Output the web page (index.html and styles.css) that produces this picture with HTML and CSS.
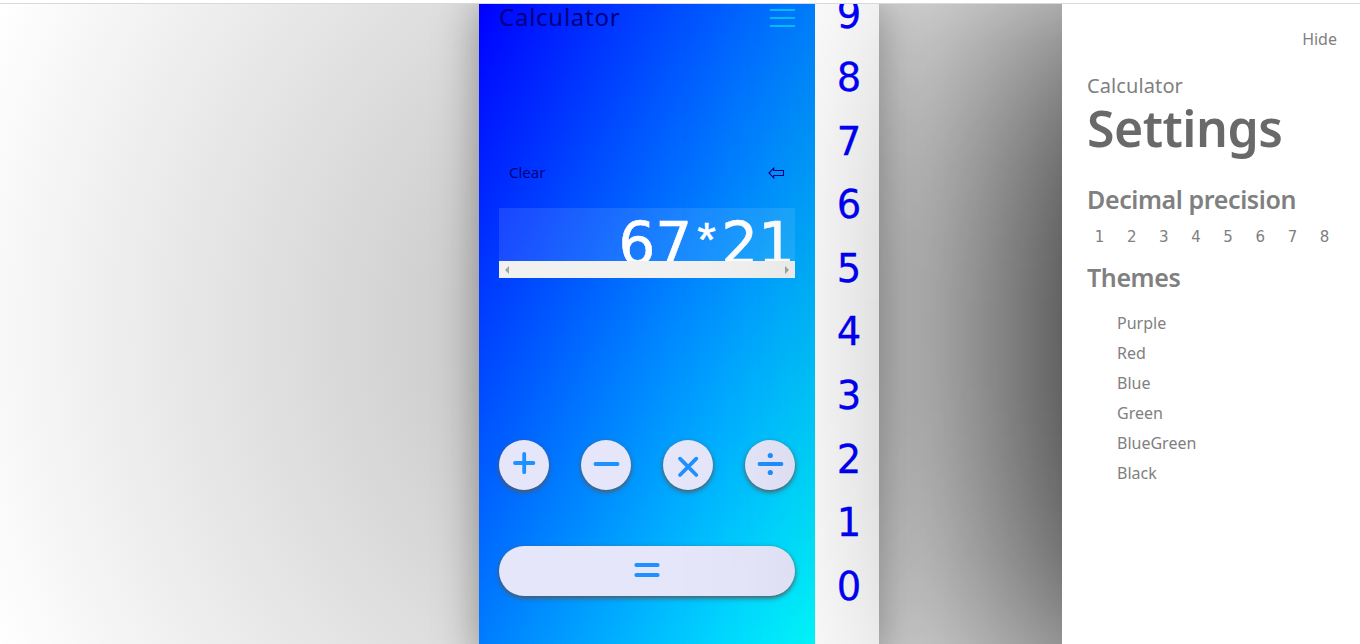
FILE: index.html
```html
<!DOCTYPE html>
<html lang="en">
<head>
<meta charset="utf-8">
<title>Calculator</title>
<link rel="stylesheet" href="styles.css">
</head>
<body>
<div class="page">
  <main class="calculator">
    <section class="face">
      <header class="top">
        <h1 class="title">Calculator</h1>
        <div class="menu"><i></i><i></i><i></i></div>
      </header>
      <div class="actions">
        <span class="clear">Clear</span>
        <svg class="back" width="17" height="12" viewBox="0 0 17 12"><path d="M1 6 5.7 1.2V3.5H15.5V8.5H5.7V10.8Z" fill="none" stroke="#000080" stroke-width="1.1"/></svg>
      </div>
      <div class="display">
        <div class="expression">67<span class="star">*</span>21</div>
        <div class="scroll">
          <svg width="4" height="8" viewBox="0 0 4 8"><path d="M4 0V8L0 4Z" fill="#a3a3a3"/></svg>
          <svg width="4" height="8" viewBox="0 0 4 8"><path d="M0 0V8L4 4Z" fill="#a3a3a3"/></svg>
        </div>
      </div>
      <div class="operators">
        <div class="key"><svg width="50" height="50"><path d="M16 23H34.4M25.2 13.8V32.2"/></svg></div>
        <div class="key"><svg width="50" height="50"><path d="M14.5 24H36.5"/></svg></div>
        <div class="key"><svg width="50" height="50"><path d="M17 18.7 33.3 35M33.3 18.7 17 35"/></svg></div>
        <div class="key"><svg width="50" height="50"><path d="M14.5 24H36.5"/><circle cx="25.3" cy="15.5" r="2.6"/><circle cx="25.3" cy="32.5" r="2.6"/></svg></div>
      </div>
      <div class="key equals"><svg width="50" height="50"><path d="M14.3 19H35.7M14.3 29H35.7"/></svg></div>
    </section>
    <nav class="digits">
      <span>9</span><span>8</span><span>7</span><span>6</span><span>5</span><span>4</span><span>3</span><span>2</span><span>1</span><span>0</span>
    </nav>
  </main>
  <aside class="settings">
    <div class="hide">Hide</div>
    <div class="app">Calculator</div>
    <h2 class="heading">Settings</h2>
    <h3 class="sub">Decimal precision</h3>
    <div class="precision"><span>1</span><span>2</span><span>3</span><span>4</span><span>5</span><span>6</span><span>7</span><span>8</span></div>
    <h3 class="sub themes">Themes</h3>
    <ul class="list">
      <li>Purple</li><li>Red</li><li>Blue</li><li>Green</li><li>BlueGreen</li><li>Black</li>
    </ul>
  </aside>
</div>
</body>
</html>
```
FILE: styles.css
```css
* { box-sizing: border-box; }
body {
  margin: 0;
  height: 644px;
  overflow: hidden;
  background: #fff;
  font-family: "Noto Sans", sans-serif;
  font-size: 16px;
}
h1, h2, h3, ul { margin: 0; padding: 0; font-weight: 400; }
.page {
  margin-top: 3px;
  height: 641px;
  border-top: 1px solid #d9d9d9;
  display: grid;
  grid-template-columns: 400px 298px;
  grid-template-rows: 657px;
  column-gap: 183px;
  padding-left: 479px;
  overflow: hidden;
  background: radial-gradient(circle at 680px 325px, #b9b9b9, #fff 752px);
}
.calculator {
  display: flex;
  box-shadow: 0 0 40px rgba(0, 0, 0, .35);
}
.face {
  width: 336px;
  padding: 0 20px;
  background: linear-gradient(to bottom right, blue, cyan);
}
.top {
  display: flex;
  justify-content: space-between;
  height: 30px;
}
.title {
  font-size: 24px;
  line-height: 26px;
  letter-spacing: .75px;
  color: #000080;
}
.menu {
  display: flex;
  flex-direction: column;
  gap: 6px;
  padding-top: 5px;
}
.menu i { width: 25px; height: 2px; background: #00bfff; }
.actions {
  display: flex;
  justify-content: space-between;
  align-items: center;
  margin-top: 128px;
  height: 22px;
  padding: 0 10px;
  color: #000080;
  font-size: 15px;
}
.clear { line-height: 20px; padding-bottom: 2px; }
.display {
  margin-top: 24px;
  height: 70px;
  background: rgba(255, 255, 255, .1);
}
.expression {
  height: 53px;
  overflow: hidden;
  font-family: "DejaVu Sans", sans-serif;
  font-size: 58px;
  line-height: 72px;
  text-align: right;
  color: #fff;
  -webkit-text-stroke: .6px #fff;
}
.star {
  display: inline-block;
  width: 29px;
  font-family: "Liberation Sans", sans-serif;
  font-size: 48px;
  line-height: 1;
  text-align: center;
  vertical-align: 8px;
}
.scroll {
  height: 17px;
  padding: 0 6px;
  display: flex;
  justify-content: space-between;
  align-items: center;
  background: #f1f1f1;
}
.operators {
  display: flex;
  justify-content: space-between;
  margin-top: 162px;
}
.key {
  width: 50px;
  height: 50px;
  border-radius: 25px;
  background: #e6e6fa;
  box-shadow: 0 2px 5px #555;
  display: flex;
  justify-content: center;
}
.key svg {
  fill: none;
  stroke: #1e90ff;
  stroke-width: 3.8;
  stroke-linecap: round;
}
.key circle { fill: #1e90ff; stroke: none; }
.equals { width: 100%; margin-top: 56px; }
.digits {
  width: 64px;
  padding-left: 4px;
  display: flex;
  flex-direction: column;
  overflow: hidden;
  background: #fff;
  color: #00f;
  font-family: "DejaVu Sans", sans-serif;
  font-size: 38.5px;
  line-height: 63.6px;
  text-align: center;
  -webkit-text-stroke: .3px #00f;
}
.digits span:first-child { margin-top: -21.5px; }
.settings {
  position: relative;
  padding: 22px 23px 0 25px;
  background: #fff;
  color: #808080;
}
/* wide soft shadow cast to the left of the panel */
.settings::before {
  content: "";
  position: absolute;
  top: 0;
  right: 100%;
  width: 400px;
  height: 640px;
  pointer-events: none;
  background: linear-gradient(to left,
    rgba(0,0,0,.56), rgba(0,0,0,.45) 40px, rgba(0,0,0,.34) 80px,
    rgba(0,0,0,.24) 120px, rgba(0,0,0,.155) 160px, rgba(0,0,0,.098) 200px,
    rgba(0,0,0,.055) 240px, rgba(0,0,0,.028) 280px, rgba(0,0,0,.012) 320px,
    rgba(0,0,0,.004) 360px, rgba(0,0,0,0) 400px);
  -webkit-mask-image: linear-gradient(
    rgba(0,0,0,.47), rgba(0,0,0,.617) 40px, rgba(0,0,0,.723) 80px,
    rgba(0,0,0,.813) 120px, rgba(0,0,0,.882) 160px, rgba(0,0,0,.93) 200px,
    rgba(0,0,0,.962) 240px, rgba(0,0,0,.985) 300px, rgba(0,0,0,.985) 380px,
    rgba(0,0,0,.96) 450px, rgba(0,0,0,.92) 500px, rgba(0,0,0,.86) 550px,
    rgba(0,0,0,.77) 595px, rgba(0,0,0,.65) 640px);
}
.hide { text-align: right; line-height: 26px; }
.app { margin-top: 20px; font-size: 20px; line-height: 28px; letter-spacing: .1px; }
.heading {
  font-size: 50px;
  line-height: 56px;
  font-weight: 600;
  letter-spacing: -.5px;
  color: #696969;
}
.sub { margin-top: 27px; font-size: 25px; line-height: 32px; font-weight: 600; letter-spacing: -.4px; }
.precision {
  display: flex;
  margin: 9px 0 0 -3.5px;
  font-family: "DejaVu Sans", sans-serif;
  font-size: 15px;
  line-height: 26px;
}
.precision span { flex: 0 0 32.15px; text-align: center; }
.themes { margin-top: 11px; }
.list { list-style: none; margin: 15px 0 0 30px; line-height: 30px; }
```
